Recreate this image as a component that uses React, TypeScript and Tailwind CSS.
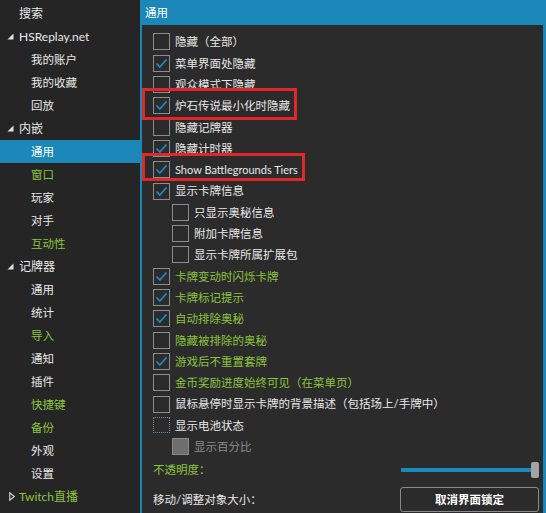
import React from "react";

type NavItem = { label: string; level: 0 | 1; kind?: "open" | "closed"; green?: boolean; active?: boolean };

const nav: NavItem[] = [
  { label: "搜索", level: 0 },
  { label: "HSReplay.net", level: 0, kind: "open" },
  { label: "我的账户", level: 1 },
  { label: "我的收藏", level: 1 },
  { label: "回放", level: 1 },
  { label: "内嵌", level: 0, kind: "open" },
  { label: "通用", level: 1, active: true },
  { label: "窗口", level: 1, green: true },
  { label: "玩家", level: 1 },
  { label: "对手", level: 1 },
  { label: "互动性", level: 1, green: true },
  { label: "记牌器", level: 0, kind: "open" },
  { label: "通用", level: 1 },
  { label: "统计", level: 1 },
  { label: "导入", level: 1, green: true },
  { label: "通知", level: 1 },
  { label: "插件", level: 1 },
  { label: "快捷键", level: 1, green: true },
  { label: "备份", level: 1, green: true },
  { label: "外观", level: 1 },
  { label: "设置", level: 1 },
  { label: "Twitch直播", level: 0, kind: "closed", green: true },
];

type Opt = {
  label: string;
  checked?: boolean;
  sub?: boolean;
  green?: boolean;
  focus?: boolean;
  disabled?: boolean;
  latin?: boolean;
};

const options: Opt[] = [
  { label: "隐藏（全部）" },
  { label: "菜单界面处隐藏", checked: true },
  { label: "观众模式下隐藏" },
  { label: "炉石传说最小化时隐藏", checked: true },
  { label: "隐藏记牌器" },
  { label: "隐藏计时器", checked: true },
  { label: "Show Battlegrounds Tiers", checked: true, latin: true },
  { label: "显示卡牌信息", checked: true },
  { label: "只显示奥秘信息", sub: true },
  { label: "附加卡牌信息", sub: true },
  { label: "显示卡牌所属扩展包", sub: true },
  { label: "卡牌变动时闪烁卡牌", checked: true, green: true },
  { label: "卡牌标记提示", checked: true, green: true },
  { label: "自动排除奥秘", checked: true, green: true },
  { label: "隐藏被排除的奥秘", green: true },
  { label: "游戏后不重置套牌", checked: true, green: true },
  { label: "金币奖励进度始终可见（在菜单页）", green: true },
  { label: "鼠标悬停时显示卡牌的背景描述（包括场上/手牌中）" },
  { label: "显示电池状态", focus: true },
  { label: "显示百分比", sub: true, disabled: true },
];

function Expander({ open }: { open: boolean }) {
  if (open) {
    return (
      <svg width="7" height="7" viewBox="0 0 7 7" className="mr-[5px] ml-[7px]">
        <path d="M6.5 0.5 L6.5 6.5 L0.5 6.5 Z" fill="#e2e2e2" />
      </svg>
    );
  }
  return (
    <svg width="6" height="9" viewBox="0 0 6 9" className="mr-[4px] ml-[9px]">
      <path d="M0.75 0.75 L5.25 4.5 L0.75 8.25 Z" fill="none" stroke="#c8c8c8" strokeWidth="1.2" />
    </svg>
  );
}

function Box({ checked, focus, disabled }: { checked?: boolean; focus?: boolean; disabled?: boolean }) {
  if (disabled) {
    return <div className="w-[17px] h-[17px] shrink-0 border border-[#8a8a8a] bg-[#6e6e6e]" />;
  }
  if (focus) {
    return (
      <div className="w-[17px] h-[16px] shrink-0 border border-dotted border-[#6f8fa8] bg-[#2b2b2b]" />
    );
  }
  return (
    <div className="w-[17px] h-[17px] shrink-0 border border-[#8c8c8c] bg-[#2b2b2b] flex items-center justify-center">
      {checked && (
        <svg width="13" height="11" viewBox="0 0 13 11">
          <path d="M1.5 5.5 L4.8 9 L11.5 1.5" fill="none" stroke="#1d8cc9" strokeWidth="1.8" />
        </svg>
      )}
    </div>
  );
}

export default function App() {
  return (
    <div
      className="w-[546px] h-[513px] flex overflow-hidden bg-[#2b2b2b] text-[11.5px] text-[#e8e8e8]"
      style={{ fontFamily: 'Lato, "Noto Sans CJK SC", sans-serif' }}
    >
      {/* navigation tree */}
      <aside className="w-[140px] shrink-0 bg-[#252525] pt-[2px] text-[12px]">
        {nav.map((n, i) => (
          <div
            key={i}
            className={`h-[23px] flex items-center ${n.active ? "bg-[#1b86b8] text-white" : ""} ${
              n.green && !n.active ? "text-[#8cc43e]" : ""
            }`}
          >
            {n.level === 0 ? (
              n.kind ? (
                <>
                  <Expander open={n.kind === "open"} />
                  <span>{n.label}</span>
                </>
              ) : (
                <span className="pl-[19px]">{n.label}</span>
              )
            ) : (
              <span className="pl-[31px] text-[11.5px]">{n.label}</span>
            )}
          </div>
        ))}
      </aside>

      {/* settings panel */}
      <main className="flex-1 flex flex-col border-l-2 border-r-[3px] border-[#1b86b8] relative">
        <header className="h-[25px] shrink-0 bg-[#1b86b8] flex items-center pl-[3px] text-white">通用</header>

        <div className="pt-[6.35px] pl-[11px] pr-[4px] flex flex-col">
          {options.map((o, i) => (
            <div
              key={i}
              className={`h-[21.3px] flex items-center gap-[5px] ${o.sub ? "pl-[19px]" : ""} ${
                o.disabled ? "text-[#8c8c8c]" : o.green ? "text-[#8cc43e]" : ""
              }`}
            >
              <Box checked={o.checked} focus={o.focus} disabled={o.disabled} />
              <span className={o.latin ? "text-[11px]" : ""}>{o.label}</span>
            </div>
          ))}

          <div className="h-[25px] flex items-center justify-between text-[#8cc43e]">
            <span>不透明度：</span>
            <div className="relative w-[138px] h-[16px] flex items-center">
              <div className="w-[132px] h-[4px] bg-[#1a87bd]" />
              <div className="absolute right-0 top-0 w-[8px] h-[16px] rounded-[2px] bg-[#a3a3a3]" />
            </div>
          </div>

          <div className="mt-[4px] h-[26px] flex items-center justify-between">
            <span>移动/调整对象大小：</span>
            <button className="w-[139px] h-[25px] rounded-[3px] border border-[#8a8a8a] bg-[#2b2b2b] text-white font-bold">
              取消界面锁定
            </button>
          </div>
        </div>

        {/* red annotation frames */}
        <div className="absolute left-0 top-[88px] w-[155px] h-[32px] border-[3px] border-[#e1262c]" />
        <div className="absolute left-0 top-[153px] w-[163px] h-[28px] border-[3px] border-[#e1262c]" />
      </main>
    </div>
  );
}
